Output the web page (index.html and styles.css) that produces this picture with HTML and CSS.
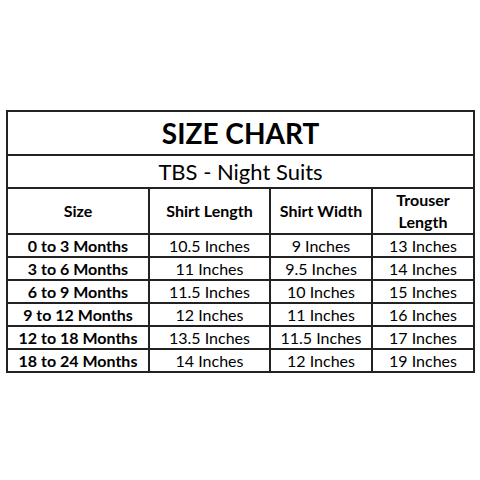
FILE: index.html
```html
<!DOCTYPE html>
<html>
<head>
<meta charset="utf-8">
<link rel="stylesheet" href="styles.css">
</head>
<body>
<div class="page">
<table class="chart">
<colgroup>
<col class="c1"><col class="c2"><col class="c3"><col class="c4">
</colgroup>
<tr class="title"><td colspan="4">SIZE CHART</td></tr>
<tr class="sub"><td colspan="4">TBS - Night Suits</td></tr>
<tr class="head"><th>Size</th><th>Shirt Length</th><th>Shirt Width</th><th>Trouser<br>Length</th></tr>
<tr><th>0 to 3 Months</th><td>10.5 Inches</td><td>9 Inches</td><td>13 Inches</td></tr>
<tr><th>3 to 6 Months</th><td>11 Inches</td><td>9.5 Inches</td><td>14 Inches</td></tr>
<tr><th>6 to 9 Months</th><td>11.5 Inches</td><td>10 Inches</td><td>15 Inches</td></tr>
<tr><th>9 to 12 Months</th><td>12 Inches</td><td>11 Inches</td><td>16 Inches</td></tr>
<tr><th>12 to 18 Months</th><td>13.5 Inches</td><td>11.5 Inches</td><td>17 Inches</td></tr>
<tr><th>18 to 24 Months</th><td>14 Inches</td><td>12 Inches</td><td>19 Inches</td></tr>
</table>
</div>
</body>
</html>
```
FILE: styles.css
```css
html, body {
  margin: 0;
  padding: 0;
  background: #fff;
}
.page {
  padding: 110px 0 0 6px;
}
.chart {
  border-collapse: collapse;
  table-layout: fixed;
  width: 467px;
  font-family: Lato, "Open Sans", sans-serif;
  color: #000;
}
.c1 { width: 142px; }
.c2 { width: 121px; }
.c3 { width: 102px; }
.c4 { width: 102px; }
.chart td, .chart th {
  border: 2px solid #222;
  text-align: center;
  padding: 0;
  height: 21px;
  font-size: 16px;
  line-height: 18px;
}
.chart th { font-weight: 700; }
.chart td { font-weight: 400; }
.title td {
  height: 42px;
  font-size: 28px;
  font-weight: 700;
}
.sub td {
  height: 31px;
  font-size: 22px;
}
.head th {
  height: 44px;
  line-height: 22px;
}
```
